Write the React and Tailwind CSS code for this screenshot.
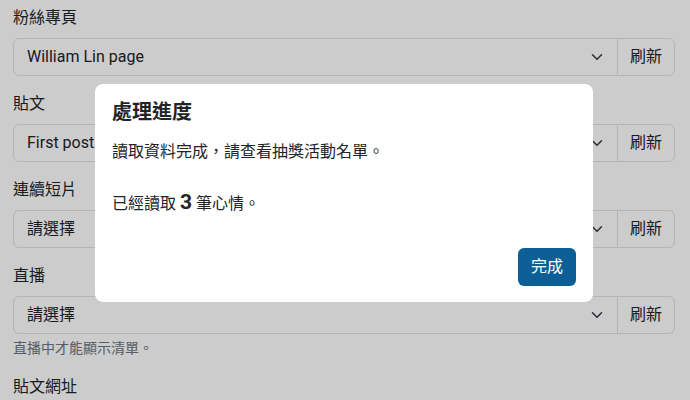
const groups = [
  { label: '粉絲專頁', value: 'William Lin page' },
  { label: '貼文', value: 'First post' },
  { label: '連續短片', value: '請選擇' },
  { label: '直播', value: '請選擇', help: '直播中才能顯示清單。' },
];

const Chevron = () => (
  <svg width="16" height="12" viewBox="0 0 16 16" className="shrink-0">
    <path d="m2 5 6 6 6-6" fill="none" stroke="#343a40" strokeWidth="2" strokeLinecap="round" strokeLinejoin="round" />
  </svg>
);

const SelectGroup = ({ label, value, help }) => (
  <div className="mb-4">
    <label className="block mb-2 text-[16px] leading-[24px]">{label}</label>
    <div className="flex h-[38px]">
      <div className="flex-1 flex items-center justify-between pl-[13px] pr-3 border border-[#dee2e6] rounded-l-[6px] bg-white">
        <span className="text-[16px] leading-[24px]">{value}</span>
        <Chevron />
      </div>
      <button className="w-[58px] -ml-px border border-[#dee2e6] rounded-r-[6px] bg-white text-[16px] text-[#212529]">
        刷新
      </button>
    </div>
    {help && <div className="mt-1 text-[14px] leading-[21px] text-[#6c757d]">{help}</div>}
  </div>
);

export default function App() {
  return (
    <div
      className="relative w-[690px] h-[400px] overflow-hidden bg-white text-[#212529]"
      style={{ fontFamily: 'Roboto, "Noto Sans CJK TC", sans-serif' }}
    >
      {/* form behind the modal */}
      <div className="pl-[13px] pr-[15px] pt-[6px]">
        {groups.map((g) => (
          <SelectGroup key={g.label} {...g} />
        ))}
        <label className="block text-[16px] leading-[24px]">貼文網址</label>
      </div>

      {/* backdrop + modal */}
      <div className="absolute inset-0 bg-black/20 pl-[95px] pt-[84px]">
        <div className="w-[498px] bg-white rounded-[8px] px-[17px] pt-4 pb-4">
          <h5 className="text-[20px] leading-[24px] font-bold">處理進度</h5>
          <p className="mt-4 text-[16px] leading-[24px]">讀取資料完成，請查看抽獎活動名單。</p>
          <p className="mt-[23px] h-[30px] text-[16px] leading-[30px]">
            已經讀取 <span className="text-[21px] leading-[30px] font-bold">3</span> 筆心情。
          </p>
          <div className="flex justify-end mt-[31px]">
            <button className="h-[38px] w-[58px] rounded-[6px] bg-[#0b5f96] text-white text-[16px]">
              完成
            </button>
          </div>
        </div>
      </div>
    </div>
  );
}
